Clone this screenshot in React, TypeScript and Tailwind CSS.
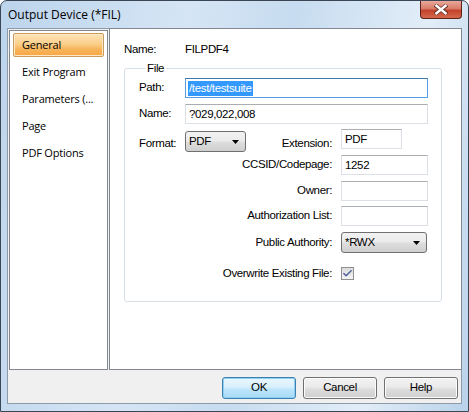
import { Check } from "lucide-react";

const navItems = ["General", "Exit Program", "Parameters (...", "Page", "PDF Options"];

function TextBox({ value, width, focused, selected }: { value?: string; width: string; focused?: boolean; selected?: boolean }) {
  return (
    <div
      className={`${width} h-[20px] flex items-center pl-[2px] bg-white border ${
        focused ? "border-[#569de5] border-t-[#3d7bad]" : "border-[#dbdfe6] border-t-[#abadb3]"
      }`}
    >
      {value && (
        <span className={`leading-[15px] px-[1px] ${selected ? "bg-[#3399ff] text-white" : ""}`}>{value}</span>
      )}
    </div>
  );
}

function Combo({ value, width }: { value: string; width: string }) {
  return (
    <div
      className={`${width} h-[21px] flex items-center justify-between pl-[3px] pr-[5px] rounded-[3px] border border-[#707070] bg-[linear-gradient(#f2f2f2_0%,#ebebeb_45%,#dddddd_55%,#cfcfcf_100%)]`}
    >
      <span>{value}</span>
      <svg width="8" height="4" viewBox="0 0 8 4">
        <path d="M0 0h7L3.5 4z" fill="#000" />
      </svg>
    </div>
  );
}

function DlgButton({ label, focused }: { label: string; focused?: boolean }) {
  return (
    <button
      className={`w-[74px] h-[22px] rounded-[3px] border text-[11.5px] text-black ${
        focused
          ? "border-[#3c7fb1] bg-[linear-gradient(#eaf6fd_0%,#d9f0fc_45%,#bee6fd_55%,#a7d9f5_100%)] shadow-[inset_0_0_0_1px_#8fd0f2]"
          : "border-[#707070] bg-[linear-gradient(#f2f2f2_0%,#ebebeb_45%,#dddddd_55%,#cfcfcf_100%)] shadow-[inset_0_0_0_1px_#fcfcfc]"
      }`}
    >
      {label}
    </button>
  );
}

export default function App() {
  return (
    <div className="w-[469px] h-[412px] flex flex-col rounded-t-[7px] border border-[#3b4654] bg-[linear-gradient(100deg,#bcd4ec_0%,#d5e5f5_35%,#c7dcf0_55%,#e2edf8_80%,#b9d2ea_100%)] font-['Liberation_Sans',sans-serif] text-[11.5px] tracking-[-0.35px] text-black overflow-hidden">
      <div className="h-[27px] flex items-start justify-between">
        <span className="pl-[7px] pt-[6px] font-['Open_Sans',sans-serif] text-[12px] tracking-normal leading-[15px]">Output Device (*FIL)</span>
        <div className="mr-[6px] w-[42px] h-[18px] flex items-center justify-center rounded-b-[4px] border border-t-0 border-[#5e2218] bg-[linear-gradient(#e8a99c_0%,#d97b68_45%,#c3422a_55%,#d46a4d_100%)]">
          <svg width="14" height="11" viewBox="0 0 14 11">
            <path d="M1 1L13 10M13 1L1 10" stroke="#5b2a22" strokeWidth="4" />
            <path d="M1.5 1L12.5 10M12.5 1L1.5 10" stroke="#fff" strokeWidth="2.4" />
          </svg>
        </div>
      </div>

      <div className="flex-1 mx-[6px] mb-[7px] flex flex-col border border-[#8e9aa8] bg-[#f0f0f0]">
        <div className="flex h-[341px]">
          <div className="w-[99px] ml-[1px] mt-[1px] flex flex-col gap-[3px] pt-[2px] px-[3px] bg-white border border-[#828790] font-['Open_Sans',sans-serif] text-[11px] tracking-[-0.2px]">
            {navItems.map((item, i) => (
              <div
                key={item}
                className={`h-[24px] flex items-center pl-[8px] ${
                  i === 0
                    ? "rounded-[2px] border border-[#c99b5c] bg-[linear-gradient(#fde3b8_0%,#fbcf8a_45%,#f8b45a_70%,#f7a645_100%)] shadow-[inset_0_0_0_1px_#ffe9c4]"
                    : "border border-transparent"
                }`}
              >
                {item}
              </div>
            ))}
          </div>

          <div className="flex-1 ml-[1px] -mr-[1px] -mt-[1px] bg-white border border-[#828790] pt-[14px] pl-[14px]">
            <div className="flex h-[14px] items-center">
              <span className="w-[61px]">Name:</span>
              <span>FILPDF4</span>
            </div>

            <fieldset className="mt-[4px] w-[318px] h-[241px] rounded-[3px] border border-[#d5dfe5] pl-[14px]">
              <legend className="ml-[6px] px-[2px] leading-[14px]">File</legend>

              <div className="mt-[3px] flex items-center">
                <span className="w-[46px]">Path:</span>
                <TextBox value="/test/testsuite" width="w-[243px]" focused selected />
              </div>
              <div className="mt-[6px] flex items-center">
                <span className="w-[46px]">Name:</span>
                <TextBox value="?029,022,008" width="w-[243px]" />
              </div>
              <div className="mt-[6px] flex items-start h-[22px]">
                <span className="w-[46px] mt-[5px]">Format:</span>
                <div className="mt-[1px]">
                  <Combo value="PDF" width="w-[61px]" />
                </div>
                <span className="w-[86px] text-right mt-[5px]">Extension:</span>
                <div className="ml-[9px] -mt-[1px]">
                  <TextBox value="PDF" width="w-[61px]" />
                </div>
              </div>
              <div className="mt-[3px] flex items-center">
                <span className="w-[193px] text-right">CCSID/Codepage:</span>
                <div className="ml-[9px]">
                  <TextBox value="1252" width="w-[87px]" />
                </div>
              </div>
              <div className="mt-[6px] flex items-center">
                <span className="w-[193px] text-right">Owner:</span>
                <div className="ml-[9px]">
                  <TextBox width="w-[87px]" />
                </div>
              </div>
              <div className="mt-[5px] flex items-center">
                <span className="w-[193px] text-right">Authorization List:</span>
                <div className="ml-[9px]">
                  <TextBox width="w-[87px]" />
                </div>
              </div>
              <div className="mt-[6px] flex items-center">
                <span className="w-[193px] text-right">Public Authority:</span>
                <div className="ml-[9px]">
                  <Combo value="*RWX" width="w-[86px]" />
                </div>
              </div>
              <div className="mt-[12px] flex items-center">
                <span className="w-[193px] text-right">Overwrite Existing File:</span>
                <div className="ml-[9px] w-[13px] h-[13px] flex items-center justify-center border border-[#8f8f8f] bg-[linear-gradient(#dcdcdc,#f4f4f4)]">
                  <Check className="w-[11px] h-[11px] text-[#4a5f97]" strokeWidth={3} />
                </div>
              </div>
            </fieldset>
          </div>
        </div>

        <div className="flex justify-end gap-[7px] pt-[7px] pr-[3px]">
          <DlgButton label="OK" focused />
          <DlgButton label="Cancel" />
          <DlgButton label="Help" />
        </div>
      </div>
    </div>
  );
}
